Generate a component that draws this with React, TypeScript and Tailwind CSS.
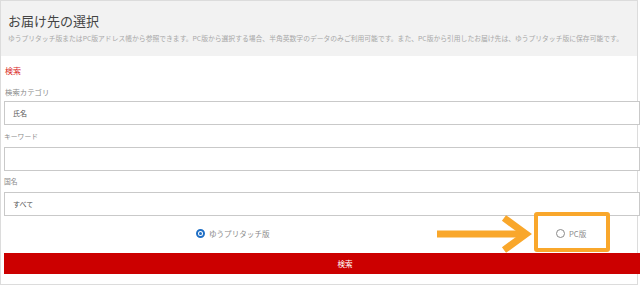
import React from 'react';

const font = { fontFamily: '"Noto Sans CJK JP", "Noto Sans", sans-serif' };

const Field: React.FC<{ value?: string }> = ({ value }) => (
  <div className="h-[24px] border border-[#c9c9c9] bg-white flex items-center pl-[8px] text-[7px] text-[#555]">
    {value}
  </div>
);

const App: React.FC = () => {
  return (
    <div className="relative w-[640px] h-[288px] bg-white overflow-hidden" style={font}>
      <div className="w-[638px] h-[285px] border border-[#dcdcdc] flex flex-col">
        {/* header */}
        <div className="h-[55px] bg-[#f2f2f2] px-[7px] pt-[11px]">
          <div className="text-[13px] leading-[17px] text-[#444]">お届け先の選択</div>
          <div className="mt-[5px] text-[6.8px] leading-[9px] text-[#a8a8a8] whitespace-nowrap">
            ゆうプリタッチ版またはPC版アドレス帳から参照できます。PC版から選択する場合、半角英数字のデータのみご利用可能です。また、PC版から引用したお届け先は、ゆうプリタッチ版に保存可能です。
          </div>
        </div>

        {/* form */}
        <div className="pl-[3px] -mr-[3px]">
          <div className="h-[30px] flex items-center pl-[1px] text-[8px] text-[#d9261c]">検索</div>
          <div className="h-[12px] flex items-center pl-[1px] text-[7.4px] text-[#8a8a8a]">検索カテゴリ</div>
          <div className="h-[3px]" />
          <Field value="氏名" />
          <div className="h-[22px] flex items-center text-[6.8px] text-[#8a8a8a]">キーワード</div>
          <Field />
          <div className="h-[21px] flex items-center text-[6.8px] text-[#8a8a8a]">国名</div>
          <Field value="すべて" />

          {/* radios */}
          <div className="h-[36px] flex items-center pl-[192px]">
            <div className="w-[360px] flex items-center gap-[4px]">
              <span className="w-[9px] h-[9px] rounded-full border-2 border-[#1f6fc5] flex items-center justify-center">
                <span className="w-[3px] h-[3px] rounded-full bg-[#1f6fc5]" />
              </span>
              <span className="text-[7.6px] text-[#8a8a8a]">ゆうプリタッチ版</span>
            </div>
            <div className="flex items-center gap-[4px]">
              <span className="w-[9px] h-[9px] rounded-full border-[1.5px] border-[#8a8a8a]" />
              <span className="text-[7.6px] text-[#8a8a8a]">PC版</span>
            </div>
          </div>

          <div className="mt-[1px] h-[21px] bg-[#cc0000] flex items-center justify-center pl-[46px] text-[7.6px] text-white">
            検索
          </div>
        </div>
      </div>

      {/* annotation overlay */}
      <svg className="absolute left-[434px] top-[214px]" width="100" height="40" viewBox="0 0 100 40">
        <line x1="3" y1="20" x2="88" y2="20" stroke="#f9a72b" strokeWidth="7" />
        <polyline points="70,4 92,20 70,36" fill="none" stroke="#f9a72b" strokeWidth="7" strokeLinejoin="miter" />
      </svg>
      <div className="absolute left-[534px] top-[212px] w-[76px] h-[40px] border-4 border-[#f9a72b] rounded-[3px]" />
    </div>
  );
};

export default App;
